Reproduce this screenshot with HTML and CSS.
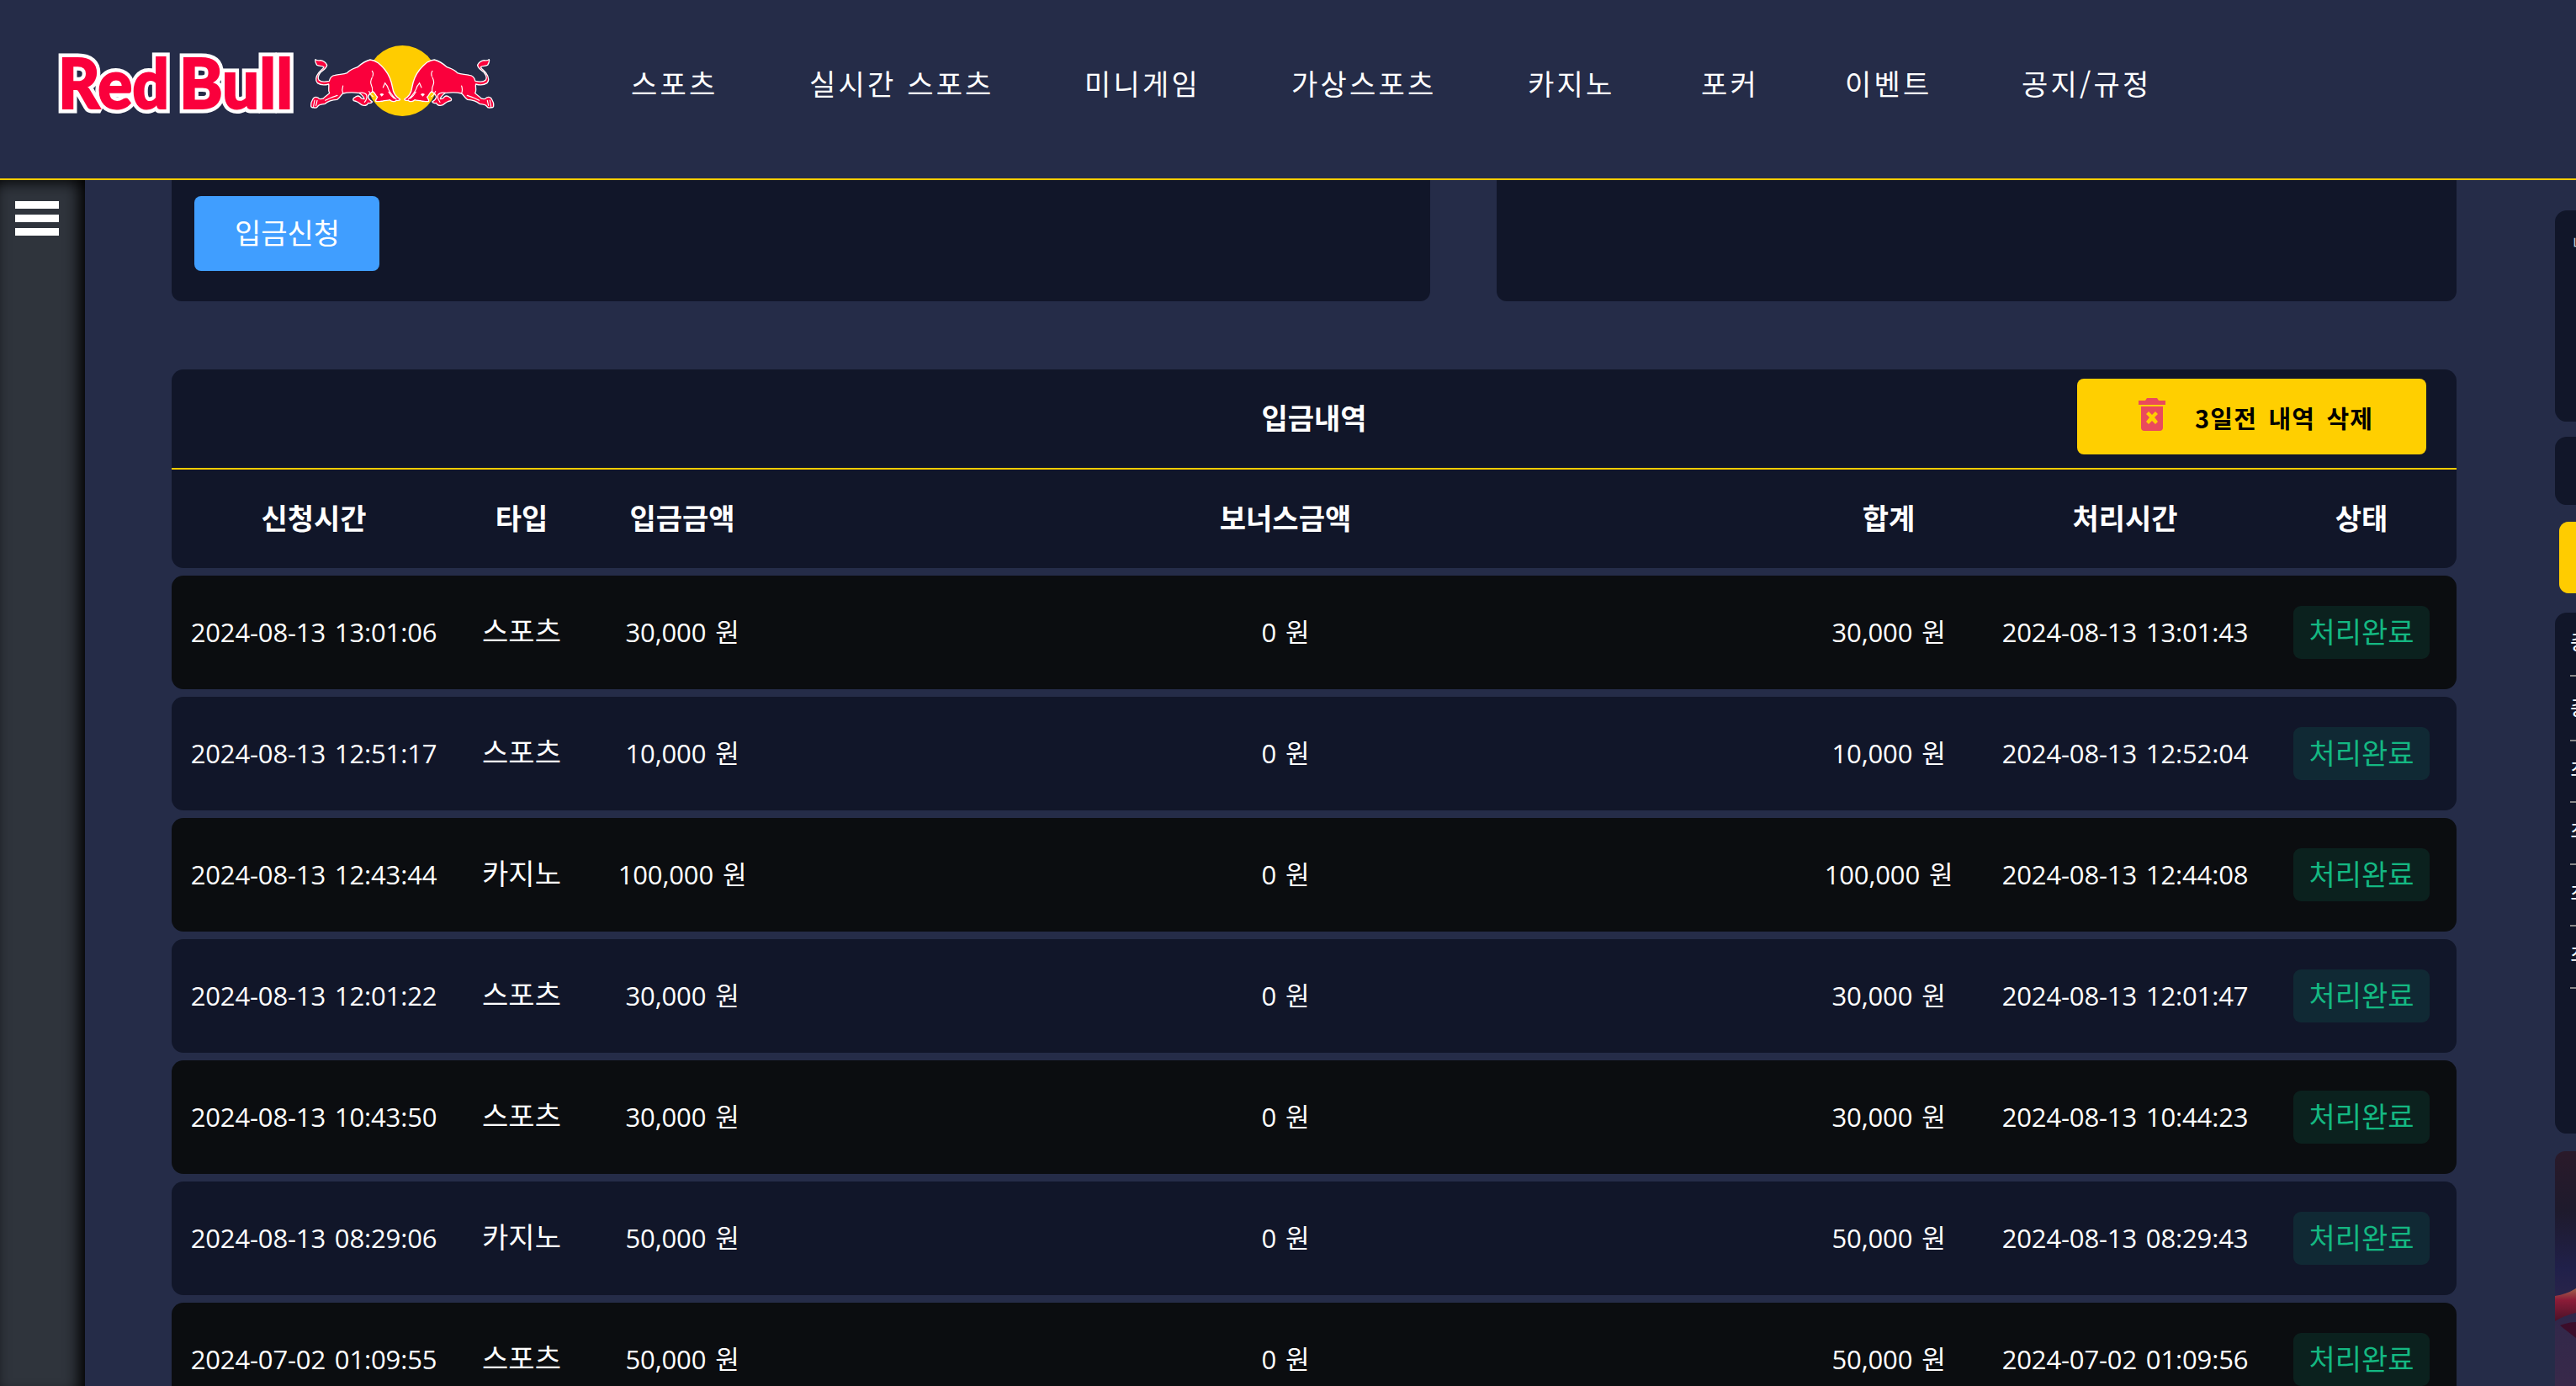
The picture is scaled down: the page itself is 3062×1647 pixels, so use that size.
FILE: index.html
```html
<!DOCTYPE html>
<html lang="ko">
<head>
<meta charset="utf-8">
<title>입금내역</title>
<link rel="stylesheet" href="styles.css">
</head>
<body>
<header class="header">
  <svg class="logo" width="520" height="120" viewBox="68 40 520 120" aria-label="Red Bull">
    <g class="logo-shadow">
      <text x="69" y="129" textLength="132" lengthAdjust="spacingAndGlyphs">Red</text>
      <text x="213" y="129" textLength="135" lengthAdjust="spacingAndGlyphs">Bull</text>
    </g>
    <g class="logo-text">
      <text x="69" y="129" textLength="132" lengthAdjust="spacingAndGlyphs">Red</text>
      <text x="213" y="129" textLength="135" lengthAdjust="spacingAndGlyphs">Bull</text>
    </g>
    <circle cx="478.300" cy="96" r="42" fill="#ffcc00"/>
    <defs>
      <g id="bull">
        <path class="bull-body" d="M45 92C49 97 56 96 63 95C73 97 82 104 86 112C85 123 72 131 63 138C56 147 52 158 57 165C65 174 81 172 94 169C97 156 104 149 115 148C130 144 145 146 158 140C168 127 183 124 195 119C210 106 224 97 240 93C262 95 276 109 293 129C309 149 316 169 320 193C322 211 334 226 347 234C345 240 339 238 333 238C328 244 318 243 310 236C302 239 294 237 286 240C275 241 269 244 260 241C259 235 264 231 266 226C258 220 259 211 249 206C243 213 232 216 233 226C235 235 241 239 248 243C244 249 240 249 233 247C230 257 218 258 210 254C202 247 195 241 181 239C177 234 180 229 187 226C193 221 198 220 204 225C207 231 212 233 219 233C218 224 210 218 202 212C184 209 159 209 143 213C135 219 132 230 122 235C103 236 90 240 79 250C67 253 58 252 53 259C50 267 43 265 37 263C32 264 28 262 29 255C27 246 33 239 37 231C41 226 47 225 54 228C59 236 66 233 73 231C76 225 89 219 95 212C88 203 95 190 92 180C78 184 62 183 52 176C43 166 48 151 56 140C63 131 72 126 75 119C67 112 57 118 50 112C46 105 42 98 45 92Z"/>
        <path class="bull-line" d="M247 133Q253 140 249 152M247 156Q239 172 244 182T248 206M143 186Q138 200 143 213M42 237L38 259M51 238L47 256M286 192L293 176L303 190M300 185Q308 211 333 234M306 208Q313 221 326 231M236 206Q240 218 250 224M200 211Q220 208 227 218Q231 232 220 244M123 220Q100 227 80 238"/>
        <path d="M274 216Q283 209 289 217L281 224Z" fill="#fff"/>
      </g>
    </defs>
    <use href="#bull" transform="translate(360 40) scale(.3333)"/>
    <use href="#bull" transform="translate(596.300 40) scale(-.3333 .3333)"/>
  </svg>
  <nav class="nav">
    <a>스포츠</a><a>실시간 스포츠</a><a>미니게임</a><a>가상스포츠</a><a>카지노</a><a>포커</a><a>이벤트</a><a>공지/규정</a>
  </nav>
</header>
<div class="page">
  <aside class="sidebar"><div class="menu"><i></i><i></i><i></i></div></aside>
  <main class="main">
    <div class="cards">
      <section class="card card-form"><button class="apply">입금신청</button></section>
      <section class="card card-info"></section>
    </div>
    <section class="history">
      <div class="history-head">
        <h2>입금내역</h2>
        <button class="delete">
          <svg width="34" height="40" viewBox="0 0 34 40"><path fill="#ea4a5c" fill-rule="evenodd" d="M1 3H9L11 0H23L25 3H33V8H1ZM4 10H30V35Q30 39 26 39H8Q4 39 4 35ZM10 19L14 23L10 28L13 31L17 27L21 31L24 28L20 23L24 19L21 16L17 20L13 16Z"/></svg>
          <span>3일전 내역 삭제</span>
        </button>
      </div>
      <div class="row labels"><b>신청시간</b><b>타입</b><b>입금금액</b><b>보너스금액</b><b>합계</b><b>처리시간</b><b>상태</b></div>
    </section>
    <div class="rows">
      <div class="row item"><span>2024-08-13 13:01:06</span><span>스포츠</span><span>30,000 원</span><span>0 원</span><span>30,000 원</span><span>2024-08-13 13:01:43</span><em>처리완료</em></div>
      <div class="row item"><span>2024-08-13 12:51:17</span><span>스포츠</span><span>10,000 원</span><span>0 원</span><span>10,000 원</span><span>2024-08-13 12:52:04</span><em>처리완료</em></div>
      <div class="row item"><span>2024-08-13 12:43:44</span><span>카지노</span><span>100,000 원</span><span>0 원</span><span>100,000 원</span><span>2024-08-13 12:44:08</span><em>처리완료</em></div>
      <div class="row item"><span>2024-08-13 12:01:22</span><span>스포츠</span><span>30,000 원</span><span>0 원</span><span>30,000 원</span><span>2024-08-13 12:01:47</span><em>처리완료</em></div>
      <div class="row item"><span>2024-08-13 10:43:50</span><span>스포츠</span><span>30,000 원</span><span>0 원</span><span>30,000 원</span><span>2024-08-13 10:44:23</span><em>처리완료</em></div>
      <div class="row item"><span>2024-08-13 08:29:06</span><span>카지노</span><span>50,000 원</span><span>0 원</span><span>50,000 원</span><span>2024-08-13 08:29:43</span><em>처리완료</em></div>
      <div class="row item"><span>2024-07-02 01:09:55</span><span>스포츠</span><span>50,000 원</span><span>0 원</span><span>50,000 원</span><span>2024-07-02 01:09:56</span><em>처리완료</em></div>
    </div>
  </main>
  <aside class="side">
    <div class="panel user">내</div>
    <div class="panel small"></div>
    <div class="side-button"></div>
    <div class="panel rules"><p>총</p><p>총</p><p>최</p><p>최</p><p>최</p><p>최</p></div>
    <svg class="banner" width="25" height="279" viewBox="0 0 25 279">
      <defs>
        <linearGradient id="bg" x1="0" y1="0" x2="0" y2="1"><stop offset="0" stop-color="#2a1a2a"/><stop offset=".25" stop-color="#1e1a2c"/><stop offset=".5" stop-color="#20204a"/><stop offset=".76" stop-color="#33284a"/><stop offset="1" stop-color="#38294a"/></linearGradient>
        <linearGradient id="band" x1="0" y1="0" x2="0" y2="1"><stop offset="0" stop-color="#a0604c"/><stop offset=".35" stop-color="#8c1c38"/><stop offset="1" stop-color="#4a1228"/></linearGradient>
      </defs>
      <rect width="25" height="279" fill="url(#bg)"/>
      <path d="M0 172Q14 170 25 163V192Q14 194 0 202Z" fill="url(#band)"/>
      <path d="M6 207Q17 203 25 203V222Q17 216 6 207Z" fill="#3c0d2a"/>
    </svg>
  </aside>
</div>
</body>
</html>
```
FILE: styles.css
```css
* { box-sizing: border-box; }

body {
  margin: 0;
  height: 1647px;
  overflow: hidden;
  background: #252c48;
  color: #fff;
  font: 31px/1 "Open Sans", "Noto Sans CJK KR", sans-serif;
}

h2, p { margin: 0; }
button { border: 0; color: inherit; font: inherit; padding: 0; }

.header {
  height: 214px;
  border-bottom: 2px solid #ffcc00;
  display: flex;
  align-items: flex-start;
  padding: 40px 0 0 68px;
}
.logo { flex: none; }
.logo text { font: 900 82px Lato, sans-serif; }
.logo-shadow { fill: #fff; stroke: #fff; stroke-width: 11px; stroke-linejoin: miter; stroke-miterlimit: 2; }
.logo-text { fill: #fa003c; stroke: #fa003c; stroke-width: 2px; }
.bull-body { fill: #fa003c; stroke: #fff; stroke-width: 4px; stroke-linejoin: round; }
.bull-line { fill: none; stroke: #fff; stroke-width: 3.5px; stroke-linecap: round; }

.nav {
  display: grid;
  grid-template-columns: 212px 327px 246px 281px 206px 171px 210px 200px;
  margin-left: 162px;
  padding-top: 29px;
  font: 34px/60px "Noto Sans CJK KR", sans-serif;
  letter-spacing: 3.2px;
  white-space: nowrap;
}

.page { display: flex; height: 1433px; overflow: hidden; }

.sidebar {
  width: 101px;
  height: 1443px;
  flex: none;
  background: #2f343c;
  box-shadow: inset -7px 2px 18px #000;
  padding: 25px 0 0 18px;
}
.menu { display: grid; gap: 7px; width: 52px; }
.menu i { height: 9px; background: #fff; }

.main { width: 2716px; flex: none; margin-left: 103px; }
.cards { display: flex; justify-content: space-between; height: 144px; }
.card { background: #111629; border-radius: 0 0 12px 12px; }
.card-form { width: 1496px; padding: 19px 27px; }
.card-info { width: 1141px; }
.apply {
  width: 220px;
  height: 89px;
  padding: 0 0 2px 1px;
  border-radius: 8px;
  background: #409eff;
  font-size: 34px;
}

.history {
  margin-top: 81px;
  height: 236px;
  background: #111629;
  border-radius: 14px;
}
.history-head {
  display: grid;
  grid-template-columns: 415px 1fr 415px;
  padding: 11px 36px 0;
  height: 119px;
  border-bottom: 2px solid #ffcc00;
}
.history-head h2 {
  grid-column: 2;
  font: 700 34px/91px "Noto Sans CJK KR", sans-serif;
  text-align: center;
}
.delete {
  height: 90px;
  border-radius: 8px;
  background: #ffcf00;
  color: #000;
  display: flex;
  padding: 23px 0 0 72px;
  font: 700 29px/46px "Noto Sans CJK KR", sans-serif;
  letter-spacing: 1.2px;
  word-spacing: 4px;
  white-space: nowrap;
}
.delete span { margin-left: 34px; }

.row {
  display: grid;
  grid-template-columns: 338px 156px 226px 1208px 226px 336px 226px;
  align-items: center;
  justify-items: center;
  white-space: nowrap;
}
.labels { height: 117px; padding-bottom: 4px; }
.labels b { font: 700 34px/1 "Noto Sans CJK KR", sans-serif; }

.rows { display: grid; gap: 9px; margin-top: 9px; }
.item {
  height: 135px;
  border-radius: 14px;
  background: #111629;
  letter-spacing: -.15px;
  word-spacing: 3px;
}
.item:nth-child(odd) { background: #0b0d10; }
.item span:nth-child(2) { font-size: 34px; padding-bottom: 3px; letter-spacing: 0; }
.item em {
  width: 162px;
  height: 63px;
  border-radius: 9px;
  background: rgba(16, 185, 129, .12);
  color: #14b882;
  font: 34px/59px "Noto Sans CJK KR", sans-serif;
  letter-spacing: 0;
  text-align: center;
}

.side { width: 25px; margin-left: 117px; padding-top: 36px; overflow: hidden; }
.panel { background: #111629; border-radius: 14px 0 0 14px; overflow: hidden; }
.user { height: 251px; padding: 30px 0 0 21px; font-size: 18px; color: #ccc; }
.small { height: 81px; margin-top: 18px; }
.side-button { height: 85px; margin: 20px 0 23px 5px; border-radius: 11px 0 0 11px; background: #ffcc00; }
.rules { height: 619px; padding-left: 18px; font-size: 25px; }
.rules p { height: 73.500px; border-bottom: 2px solid #888; padding-top: 21px; }
.rules p:first-child { height: 76px; padding-top: 22px; }
.rules p:nth-child(2) { height: 76.500px; padding-top: 24px; }
.banner { display: block; margin-top: 21px; border-radius: 12px 0 0 0; }
```
